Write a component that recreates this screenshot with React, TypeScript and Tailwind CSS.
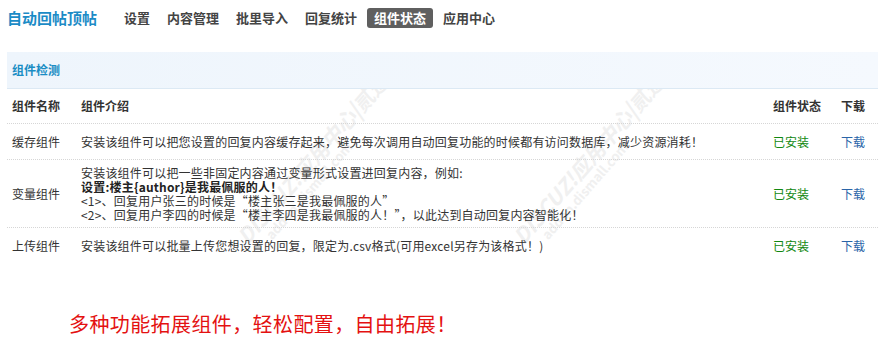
import React from "react";

const font = "font-['Noto_Sans_CJK_SC','Noto_Sans',sans-serif]";

function Watermark({ left }: { left: number }) {
  return (
    <div
      className="absolute pointer-events-none select-none z-0"
      style={{ left, top: 232, transform: "rotate(-49deg)", transformOrigin: "left top" }}
    >
      <div className="text-[21px] font-bold italic leading-[24px] text-[#f0f0f0] whitespace-nowrap">
        DISCUZ!应用中心|贰道
      </div>
      <div className="text-[13px] font-bold leading-[14px] text-[#f0f0f0] whitespace-nowrap pl-[20px]">
        addon.dismall.com
      </div>
    </div>
  );
}

export default function App() {
  const navItems = ["设置", "内容管理", "批里导入", "回复统计", "组件状态", "应用中心"];
  return (
    <div className={`relative w-[886px] h-[345px] overflow-hidden bg-white text-[#333] ${font}`}>
      <Watermark left={232} />
      <Watermark left={508} />

      <div className="relative z-10">
        {/* top nav */}
        <div className="flex items-center pt-[8px] h-[28px] pl-[7px]">
          <div className="text-[15px] font-bold text-[#1b8bc6] leading-[20px] w-[110px]">自动回帖顶帖</div>
          <div className="flex gap-[3px]">
            {navItems.map((n) => (
              <div
                key={n}
                className={
                  n === "组件状态"
                    ? "h-[20px] px-[7px] rounded-[3px] bg-[#5f5f5f] text-white text-[13px] font-bold leading-[20px]"
                    : "h-[20px] px-[7px] text-[#444] text-[13px] font-bold leading-[20px]"
                }
              >
                {n}
              </div>
            ))}
          </div>
        </div>

        {/* table */}
        <div className="mx-[7px] mt-[24px] w-[871px]">
          <div className="h-[37px] border-b border-[#dce9f4] bg-gradient-to-r from-[#eef5fc] to-[#f5f9fe] flex items-center pl-[5px]">
            <span className="text-[12px] font-bold text-[#1a8dc4]">组件检测</span>
          </div>
          <div className="grid grid-cols-[69px_692px_68px_1fr] pl-[5px] h-[35px] items-center border-b border-dotted border-[#d6d6d6] text-[12px] font-bold text-[#333]">
            <div>组件名称</div>
            <div>组件介绍</div>
            <div>组件状态</div>
            <div>下载</div>
          </div>
          <div className="grid grid-cols-[69px_692px_68px_1fr] pl-[5px] h-[36px] items-center border-b border-dotted border-[#d6d6d6] text-[12px] text-[#333]">
            <div>缓存组件</div>
            <div className="tracking-[0.2px] whitespace-nowrap">安装该组件可以把您设置的回复内容缓存起来，避免每次调用自动回复功能的时候都有访问数据库，减少资源消耗！</div>
            <div className="text-[#118811]">已安装</div>
            <div className="text-[#2a64a8]">下载</div>
          </div>
          <div className="grid grid-cols-[69px_692px_68px_1fr] pl-[5px] h-[68px] items-center border-b border-dotted border-[#d6d6d6] text-[12px] text-[#333]">
            <div>变量组件</div>
            <div className="leading-[14px] tracking-[0.2px] whitespace-nowrap">
              <div>安装该组件可以把一些非固定内容通过变量形式设置进回复内容，例如:</div>
              <div className="font-bold text-[#222]">设置:楼主{"{author}"}是我最佩服的人！</div>
              <div>&lt;1&gt;、回复用户张三的时候是“楼主张三是我最佩服的人”</div>
              <div>&lt;2&gt;、回复用户李四的时候是“楼主李四是我最佩服的人！”，以此达到自动回复内容智能化！</div>
            </div>
            <div className="text-[#118811]">已安装</div>
            <div className="text-[#2a64a8]">下载</div>
          </div>
          <div className="grid grid-cols-[69px_692px_68px_1fr] pl-[5px] h-[36px] items-center text-[12px] text-[#333]">
            <div>上传组件</div>
            <div className="tracking-[0.2px] whitespace-nowrap">安装该组件可以批量上传您想设置的回复，限定为.csv格式(可用excel另存为该格式！)</div>
            <div className="text-[#118811]">已安装</div>
            <div className="text-[#2a64a8]">下载</div>
          </div>
        </div>

        <div className="pl-[69px] mt-[48px] text-[20px] leading-[24px] text-[#e41111] whitespace-nowrap tracking-[0.4px]">
          多种功能拓展组件，轻松配置，自由拓展！
        </div>
      </div>
    </div>
  );
}
